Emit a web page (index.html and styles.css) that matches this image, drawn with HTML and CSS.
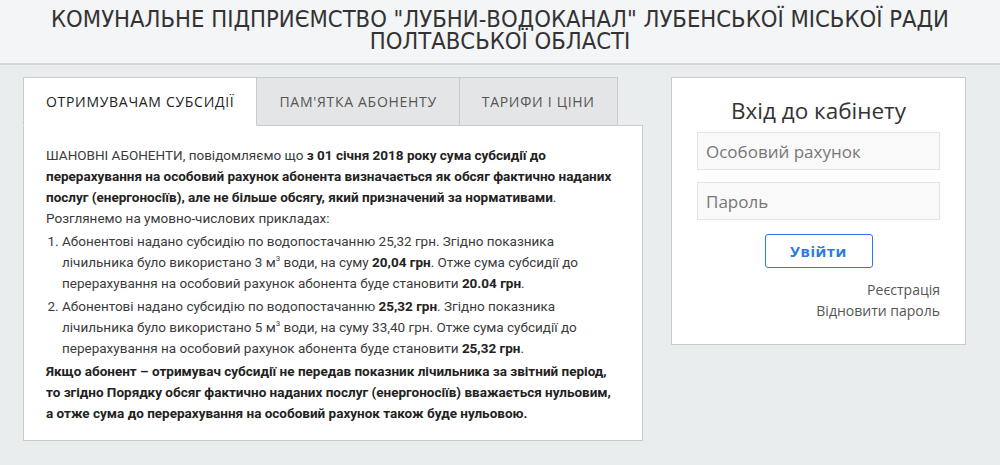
FILE: index.html
```html
<!DOCTYPE html>
<html lang="uk">
<head>
  <meta charset="UTF-8"/>
  <meta name="viewport" content="width=device-width, initial-scale=1.0"/>
  <title>КП "Лубни-Водоканал"</title>
  <link rel="stylesheet" href="styles.css">
</head>
<body>

  <!-- Header -->
  <header class="site-header">
    <h1>Комунальне підприємство "Лубни-Водоканал" Лубенської міської ради<br>Полтавської області</h1>
  </header>

  <div class="page">

    <!-- Tabs -->
    <section class="tabs">
      <div class="tab-bar">
        <a class="tab active" href="#">Отримувачам субсидії</a>
        <a class="tab" href="#">Пам'ятка абоненту</a>
        <a class="tab" href="#">Тарифи і ціни</a>
      </div>
      <div class="tab-panel">
        <p>ШАНОВНІ АБОНЕНТИ, повідомляємо що <b>з 01 січня 2018 року сума субсидії до перерахування на особовий рахунок абонента визначається як обсяг фактично наданих послуг (енергоносіїв), але не більше обсягу, який призначений за нормативами</b>.</p>
        <p>Розглянемо на умовно-числових прикладах:</p>
        <ol>
          <li>Абонентові надано субсидію по водопостачанню 25,32 грн. Згідно показника лічильника було використано 3 м<sup>3</sup> води, на суму <b>20,04 грн</b>. Отже сума субсидії до перерахування на особовий рахунок абонента буде становити <b>20.04 грн</b>.</li>
          <li>Абонентові надано субсидію по водопостачанню <b>25,32 грн</b>. Згідно показника лічильника було використано 5 м<sup>3</sup> води, на суму 33,40 грн. Отже сума субсидії до перерахування на особовий рахунок абонента буде становити <b>25,32 грн</b>.</li>
        </ol>
        <p><b>Якщо абонент – отримувач субсидії не передав показник лічильника за звітний період, то згідно Порядку обсяг фактично наданих послуг (енергоносіїв) вважається нульовим, а отже сума до перерахування на особовий рахунок також буде нульовою.</b></p>
      </div>
    </section>

    <!-- Login -->
    <aside class="login">
      <h2>Вхід до кабінету</h2>
      <form class="login-form" onsubmit="return false">
        <input type="text" placeholder="Особовий рахунок">
        <input type="password" placeholder="Пароль">
        <button type="submit">Увійти</button>
      </form>
      <nav class="login-links">
        <a href="#">Реєстрація</a>
        <a href="#">Відновити пароль</a>
      </nav>
    </aside>

  </div>

</body>
</html>
```

FILE: styles.css
```css
:root {
  --page-bg: #eaedee;
  --header-bg: #f3f5f6;
  --border: #c9cccd;
  --text: #3b3b3b;
  --dark: #222;
  --blue: #2a7ae2;
}
* { margin:0; padding:0; box-sizing:border-box }
body {
  font-family:'Roboto','Liberation Sans',sans-serif;
  background:var(--page-bg);
  color:var(--text);
}
a { text-decoration:none; color:inherit }

/* Header */
.site-header {
  background:var(--header-bg);
  border-bottom:2px solid #d3d6d8;
  height:65px;
  padding-top:8px;
  text-align:center;
}
.site-header h1 {
  font-family:'DejaVu Sans',sans-serif;
  font-stretch:condensed;
  font-weight:400;
  font-size:23.6px;
  line-height:22px;
  text-transform:uppercase;
  color:#333;
}

/* Page */
.page {
  display:flex; align-items:flex-start; gap:28px;
  padding:12px 0 0 23px;
}

/* Tabs */
.tabs { width:620px }
.tab-bar { display:flex }
.tab {
  font-family:'Open Sans',sans-serif;
  font-size:14px; letter-spacing:.7px;
  text-transform:uppercase;
  color:#555;
  background:#e3e5e6;
  border:1px solid var(--border);
  border-left:none;
  height:49px; line-height:47px;
  padding:0 22px;
  margin-bottom:-1px;
  position:relative;
}
.tab.active {
  background:#fff; color:#222;
  border-left:1px solid var(--border);
  border-bottom-color:#fff;
  z-index:1;
}
.tab-panel {
  background:#fff;
  border:1px solid var(--border);
  padding:19px 22px 16px;
  font-size:13.5px; line-height:21px;
}
.tab-panel b { color:var(--dark); font-weight:700 }
.tab-panel sup { font-size:8px; line-height:0; vertical-align:6px }
.tab-panel ol { padding:2px 0 2px 16px }
.tab-panel li + li { margin-top:2px }

/* Login */
.login {
  width:295px; height:268px;
  background:#fff;
  border:1px solid var(--border);
  padding:18px 25px 0;
  font-family:'Open Sans',sans-serif;
}
.login h2 {
  font-size:22.5px; font-weight:400;
  text-align:center; color:#333;
  line-height:30px;
}
.login-form {
  display:flex; flex-direction:column; align-items:center;
  gap:12px; margin-top:6px;
}
.login-form input {
  width:100%; height:38px;
  font-family:inherit; font-size:17px;
  padding:0 8px;
  background:#f9f9f9;
  border:1px solid #e4e4e4;
  color:#333;
}
.login-form input::placeholder { color:#777 }
.login-form button {
  width:108px; height:34px;
  margin-top:2px;
  background:#fff;
  border:1px solid var(--blue); border-radius:3px;
  color:var(--blue);
  font-family:inherit; font-size:15px; font-weight:700;
  letter-spacing:.5px;
}
.login-links {
  display:flex; flex-direction:column; align-items:flex-end;
  margin-top:11px;
  font-size:14px; line-height:21px; color:#555;
}
```
